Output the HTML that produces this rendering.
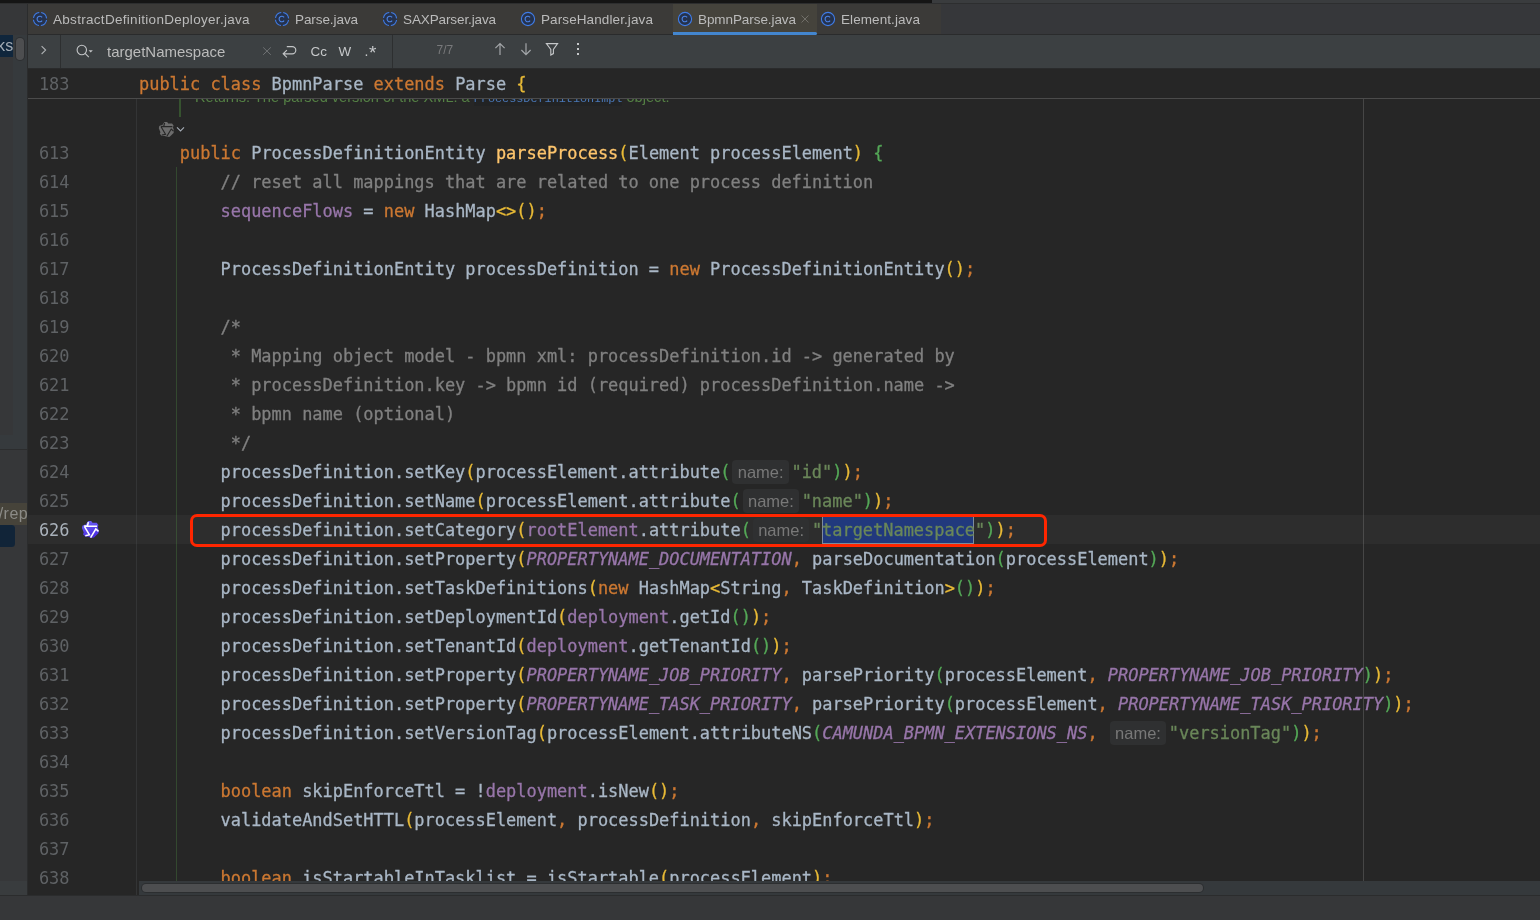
<!DOCTYPE html>
<html lang="en">
<head>
<meta charset="utf-8">
<title>BpmnParse.java</title>
<style>
html,body{margin:0;padding:0;}
body{will-change:transform;width:1540px;height:920px;overflow:hidden;background:#262626;position:relative;font-family:"Liberation Sans",sans-serif;}
.abs{position:absolute;}
/* top */
#topdark{left:0;top:0;width:932px;height:3px;background:#151515;}
#toplight{left:932px;top:0;width:608px;height:3px;background:#3a3c3e;}
#topline{left:0;top:3px;width:1540px;height:1px;background:#2d2e2f;}
/* left strip */
#strip{left:0;top:4px;width:27px;height:891px;background:#363739;}
#stripb{left:27px;top:4px;width:1px;height:891px;background:#2b2c2d;}
/* tab bar */
#tabbar{left:28px;top:4px;width:1512px;height:30px;background:#36373a;}
#tabsbg{left:28px;top:4px;width:913px;height:30px;background:#3b3a38;}
#tabact{left:673px;top:4px;width:144px;height:30px;background:#45433c;}
#tabul{left:673px;top:32px;width:144px;height:3px;background:#4386cf;border-radius:0 1.5px 1.5px 0;}
#tabline{left:28px;top:34px;width:1512px;height:1px;background:#2a2b2c;}
.tab{position:absolute;top:5px;height:27px;line-height:29px;font-size:13.5px;color:#bbbbbb;white-space:nowrap;}
.ticon{position:absolute;top:11px;width:16px;height:16px;}
/* search bar */
#sbar{left:28px;top:35px;width:1512px;height:33px;background:#3c4042;}
#sline{left:28px;top:68px;width:1512px;height:1px;background:#2a2b2c;}
.vdiv{position:absolute;top:35px;width:1px;height:33px;background:#2d2f30;}
.stxt{position:absolute;white-space:nowrap;color:#bbbbbb;}
/* editor */
#sticky{left:28px;top:69px;width:1512px;height:29px;background:#262626;}
#stickyline{left:28px;top:98px;width:1512px;height:1px;background:#4b4b4b;}
.code{font-family:"DejaVu Sans Mono","Liberation Mono",monospace;font-size:16.94px;}
.ln{position:absolute;left:28px;width:41.5px;text-align:right;height:29px;line-height:29px;color:#5f6265;font-family:"DejaVu Sans Mono","Liberation Mono",monospace;font-size:16.94px;padding-top:1px;box-sizing:content-box;}
.cl{position:absolute;left:139px;-webkit-text-stroke:0.3px;height:29px;line-height:29px;white-space:pre;color:#a9b7c6;font-family:"DejaVu Sans Mono","Liberation Mono",monospace;font-size:16.94px;padding-top:1px;}
.k{color:#cc7832;}
.f{color:#9876aa;}
.c{color:#9876aa;font-style:italic;}
.s{color:#6a8759;}
.m{color:#ffc66d;}
.g{color:#808080;}
.y{color:#e8ba36;}
.n{color:#54a857;}
.h{-webkit-text-stroke:0;display:inline-block;box-sizing:border-box;width:56.5px;height:24px;margin:0 2.5px 0 2px;padding-left:5.3px;border-radius:4px;background:#2f3031;color:#787878;font-family:"Liberation Sans",sans-serif;font-size:16.5px;line-height:24px;vertical-align:top;position:relative;top:2px;white-space:nowrap;overflow:hidden;}
</style>
</head>
<body>

<!-- top chrome -->
<div class="abs" id="topdark"></div>
<div class="abs" id="toplight"></div>
<div class="abs" id="topline"></div>

<!-- tab bar -->
<div class="abs" id="tabbar"></div>
<div class="abs" id="tabsbg"></div>
<div class="abs" id="tabact"></div>
<div class="abs" id="tabline"></div>
<div class="abs" id="tabul"></div>

<svg class="ticon" style="left:32px" viewBox="0 0 16 16"><circle cx="8" cy="8" r="6.6" fill="#25324d" stroke="#3f7ce8" stroke-width="1.1" stroke-dasharray="8.4 1.97" stroke-dashoffset="-1"/><path d="M10.1 6.4A2.750 2.750 0 1 0 10.1 9.600" fill="none" stroke="#4c86ea" stroke-width="1.1"/></svg>
<div class="tab" style="left:53px;letter-spacing:0.3px">AbstractDefinitionDeployer.java</div>

<svg class="ticon" style="left:274px" viewBox="0 0 16 16"><circle cx="8" cy="8" r="6.6" fill="#25324d" stroke="#3f7ce8" stroke-width="1.1" stroke-dasharray="8.4 1.97" stroke-dashoffset="-1"/><path d="M10.1 6.4A2.750 2.750 0 1 0 10.1 9.600" fill="none" stroke="#4c86ea" stroke-width="1.1"/></svg>
<div class="tab" style="left:295px;letter-spacing:-0.08px">Parse.java</div>

<svg class="ticon" style="left:382px" viewBox="0 0 16 16"><circle cx="8" cy="8" r="6.6" fill="#25324d" stroke="#3f7ce8" stroke-width="1.1" stroke-dasharray="8.4 1.97" stroke-dashoffset="-1"/><path d="M10.1 6.4A2.750 2.750 0 1 0 10.1 9.600" fill="none" stroke="#4c86ea" stroke-width="1.1"/></svg>
<div class="tab" style="left:403px;letter-spacing:-0.11px">SAXParser.java</div>

<svg class="ticon" style="left:520px" viewBox="0 0 16 16"><circle cx="8" cy="8" r="6.6" fill="#25324d" stroke="#3f7ce8" stroke-width="1.1"/><path d="M10.1 6.4A2.750 2.750 0 1 0 10.1 9.600" fill="none" stroke="#4c86ea" stroke-width="1.1"/></svg>
<div class="tab" style="left:541px;letter-spacing:0.1px">ParseHandler.java</div>

<svg class="ticon" style="left:677px" viewBox="0 0 16 16"><circle cx="8" cy="8" r="6.6" fill="#25324d" stroke="#3f7ce8" stroke-width="1.1"/><path d="M10.1 6.4A2.750 2.750 0 1 0 10.1 9.600" fill="none" stroke="#4c86ea" stroke-width="1.1"/></svg>
<div class="tab" style="left:698px;letter-spacing:-0.08px">BpmnParse.java</div>
<svg class="abs" style="left:800px;top:14px;width:10px;height:10px" viewBox="0 0 10 10"><path d="M1.5 1.5L8.5 8.5M8.5 1.5L1.5 8.5" stroke="#716f69" stroke-width="1" fill="none"/></svg>

<svg class="ticon" style="left:820px" viewBox="0 0 16 16"><circle cx="8" cy="8" r="6.6" fill="#25324d" stroke="#3f7ce8" stroke-width="1.1"/><path d="M10.1 6.4A2.750 2.750 0 1 0 10.1 9.600" fill="none" stroke="#4c86ea" stroke-width="1.1"/></svg>
<div class="tab" style="left:841px;letter-spacing:0.08px">Element.java</div>

<!-- search bar -->
<div class="abs" id="sbar"></div>
<div class="abs" id="sline"></div>
<div class="vdiv" style="left:60px"></div>
<div class="vdiv" style="left:392px"></div>
<!-- chevron -->
<svg class="abs" style="left:38px;top:43px;width:12px;height:14px" viewBox="0 0 12 14"><path d="M3.6 3.2L7.6 7.1L3.6 11" stroke="#aeb1b4" stroke-width="1.1" fill="none"/></svg>
<!-- magnifier -->
<svg class="abs" style="left:74px;top:42px;width:22px;height:18px" viewBox="0 0 22 18"><circle cx="7.800" cy="8" r="4.700" fill="none" stroke="#c3c5c7" stroke-width="1.1"/><path d="M11.1 11.4L14.800 15.100" stroke="#c3c5c7" stroke-width="1.1" fill="none"/><path d="M14.6 8.2h4.2l-2.1 2.2z" fill="#c3c5c7"/></svg>
<div class="stxt" style="left:107px;top:40px;font-size:15px;line-height:24px;">targetNamespace</div>
<!-- clear x -->
<svg class="abs" style="left:261px;top:45px;width:12px;height:12px" viewBox="0 0 12 12"><path d="M2.2 2.4L9.8 9.8M9.8 2.4L2.2 9.8" stroke="#6f7274" stroke-width="1" fill="none"/></svg>
<!-- newline icon -->
<svg class="abs" style="left:280px;top:43px;width:18px;height:16px" viewBox="0 0 18 16"><path d="M6.8 3.6H12.2A3.6 3.6 0 0 1 12.2 10.8H3.2M6.9 7.2L3.2 10.8L6.9 14.4" stroke="#c3c5c7" stroke-width="1.15" fill="none"/></svg>
<div class="stxt" style="left:310.5px;top:40.800px;font-size:13.4px;line-height:22px;color:#c6c8ca">Cc</div>
<div class="stxt" style="left:338.5px;top:40.800px;font-size:13.4px;line-height:22px;color:#c6c8ca">W</div>
<div class="stxt" style="left:364.5px;top:40.2px;font-size:14px;line-height:22px;color:#c6c8ca;">.<span style="font-size:19px;line-height:1px;vertical-align:-3px;margin-left:0.5px">*</span></div>
<div class="stxt" style="left:436.5px;top:39px;font-size:12px;line-height:22px;color:#78797b">7/7</div>
<!-- arrows -->
<svg class="abs" style="left:492px;top:41px;width:16px;height:16px" viewBox="0 0 16 16"><path d="M8 14V2.6M3.4 7.2L8 2.6L12.6 7.2" stroke="#a3a6a9" stroke-width="1.2" fill="none"/></svg>
<svg class="abs" style="left:518px;top:41px;width:16px;height:16px" viewBox="0 0 16 16"><path d="M8 2.2V13.6M3.4 9L8 13.6L12.6 9" stroke="#a3a6a9" stroke-width="1.2" fill="none"/></svg>
<!-- filter -->
<svg class="abs" style="left:544px;top:41px;width:16px;height:16px" viewBox="0 0 16 16"><path d="M2.4 2.6H13.6L9.4 8.4V12.6L6.8 14V8.4Z" stroke="#c6c8ca" stroke-width="1.1" fill="none" stroke-linejoin="miter"/></svg>
<!-- more dots -->
<div class="abs" style="left:577px;top:43px;width:2px;height:2px;background:#c6c8ca"></div>
<div class="abs" style="left:577px;top:48px;width:2px;height:2px;background:#c6c8ca"></div>
<div class="abs" style="left:577px;top:53px;width:2px;height:2px;background:#c6c8ca"></div>

<!-- left strip -->
<div class="abs" id="strip"></div>
<div class="abs" id="stripb"></div>
<div class="abs" style="left:13px;top:35px;width:14px;height:414px;background:#363a3d"></div>
<div class="abs" style="left:0;top:435px;width:27px;height:14px;background:#363a3d"></div>
<div class="abs" style="left:0;top:35px;width:13px;height:22px;background:#10263c;overflow:hidden"><span style="position:absolute;left:-3.1px;top:0.7px;font-size:16px;letter-spacing:0.3px;line-height:20px;color:#a3acb5;white-space:nowrap">ks</span></div>
<div class="abs" style="left:16px;top:38px;width:8px;height:22px;border-radius:4px;background:#4d4e50;box-shadow:0 0 0 1px #2d2f31"></div>
<div class="abs" style="left:0;top:449px;width:27px;height:1px;background:#2c2d2e"></div>
<div class="abs" style="left:0;top:450px;width:27px;height:445px;background:#363739"></div>
<div class="abs" style="left:0;top:503px;width:27px;height:22px;background:#46433a;overflow:hidden"><span style="position:absolute;left:-1.300px;top:0.5px;font-size:16px;letter-spacing:0.45px;line-height:20px;color:#8b8b87;white-space:nowrap">/repo</span></div>
<div class="abs" style="left:-6px;top:525px;width:21px;height:22px;border-radius:3.5px;background:#112438"></div>
<div class="abs" style="left:0;top:881px;width:27px;height:14px;background:#393c3e"></div>

<!-- editor -->
<div class="abs" style="left:136px;top:99px;width:1px;height:796px;background:#333435"></div>
<div class="abs" style="left:176px;top:167px;width:1px;height:714px;background:#33482f"></div>
<div class="abs" style="left:1363px;top:99px;width:1px;height:782px;background:#464646"></div>
<div class="abs" style="left:28px;top:515px;width:1512px;height:29px;background:#2d2d2d"></div>
<div class="abs" style="left:136px;top:515px;width:1px;height:29px;background:#38393a"></div>
<div class="abs" style="left:176px;top:515px;width:1px;height:29px;background:#384d34"></div>
<div class="abs" style="left:1363px;top:515px;width:1px;height:29px;background:#4b4b4b"></div>

<div class="abs" style="left:821.5px;top:516px;width:152.5px;height:28px;box-sizing:border-box;background:#21397d;border:1px solid #7d8b9c"></div>

<!-- rendered doc fragment -->
<div class="abs" style="left:179px;top:99px;width:2px;height:18px;background:#36522f"></div>
<div class="abs" style="left:195px;top:87px;height:20px;line-height:20px;font-size:14.6px;color:#548044;white-space:nowrap">Returns: The parsed version of the XML: a <span style="font-family:'Liberation Mono',monospace;font-size:11.8px;color:#4a78b8;background:#222324">ProcessDefinitionImpl</span> object.</div>

<!-- inlay icon row -->
<svg class="abs" style="left:158px;top:121px;width:17px;height:17px" viewBox="0 0 19 19"><path d="M7.1 1h3.1l1.300 1.800h4.200l1.700 2.300-.700 2 1.300 3.900-.600 2.300-4.300 4.200-3.900.5-1-1.300-4.200-.300-2-2.200.700-1.600-1.800-4.600.500-2.300 2-1h1.300z" fill="#6c6c6c"/><path d="M7.400 2.100L6.400 6L3.200 6.100L16.100 6.300M3.400 6.400L8.400 14.800L4.300 15.700M9.600 17.600L14.800 9L17.500 11.400" stroke="#262626" stroke-width="1.300" fill="none"/></svg>
<svg class="abs" style="left:176px;top:126px;width:9px;height:7px" viewBox="0 0 9 7"><path d="M1 1.300L4.500 4.900L8 1.300" stroke="#a4abb5" stroke-width="1.1" fill="none"/></svg>


<!-- sticky line -->
<div class="abs" id="sticky"></div>
<div class="abs" id="stickyline"></div>
<div class="ln" style="top:69px">183</div>
<div class="cl" style="top:69px"><span class="k">public class</span> BpmnParse <span class="k">extends</span> Parse <span class="y">{</span></div>

<!-- code -->
<div class="ln" style="top:138px">613</div>
<div class="cl" style="top:138px">    <span class="k">public</span> ProcessDefinitionEntity <span class="m">parseProcess</span><span class="y">(</span>Element processElement<span class="y">)</span> <span class="n">{</span></div>
<div class="ln" style="top:167px">614</div>
<div class="cl" style="top:167px">        <span class="g">// reset all mappings that are related to one process definition</span></div>
<div class="ln" style="top:196px">615</div>
<div class="cl" style="top:196px">        <span class="f">sequenceFlows</span> = <span class="k">new</span> HashMap<span class="y">&lt;&gt;()</span><span class="k">;</span></div>
<div class="ln" style="top:225px">616</div>
<div class="ln" style="top:254px">617</div>
<div class="cl" style="top:254px">        ProcessDefinitionEntity processDefinition = <span class="k">new</span> ProcessDefinitionEntity<span class="y">()</span><span class="k">;</span></div>
<div class="ln" style="top:283px">618</div>
<div class="ln" style="top:312px">619</div>
<div class="cl" style="top:312px">        <span class="g">/*</span></div>
<div class="ln" style="top:341px">620</div>
<div class="cl" style="top:341px">        <span class="g"> * Mapping object model - bpmn xml: processDefinition.id -&gt; generated by</span></div>
<div class="ln" style="top:370px">621</div>
<div class="cl" style="top:370px">        <span class="g"> * processDefinition.key -&gt; bpmn id (required) processDefinition.name -&gt;</span></div>
<div class="ln" style="top:399px">622</div>
<div class="cl" style="top:399px">        <span class="g"> * bpmn name (optional)</span></div>
<div class="ln" style="top:428px">623</div>
<div class="cl" style="top:428px">        <span class="g"> */</span></div>
<div class="ln" style="top:457px">624</div>
<div class="cl" style="top:457px">        processDefinition.setKey<span class="y">(</span>processElement.attribute<span class="n">(</span><span class="h">name:</span><span class="s">"id"</span><span class="n">)</span><span class="y">)</span><span class="k">;</span></div>
<div class="ln" style="top:486px">625</div>
<div class="cl" style="top:486px">        processDefinition.setName<span class="y">(</span>processElement.attribute<span class="n">(</span><span class="h">name:</span><span class="s">"name"</span><span class="n">)</span><span class="y">)</span><span class="k">;</span></div>
<div class="ln" style="top:515px;color:#a9b1ba">626</div>
<div class="cl" style="top:515px">        processDefinition.setCategory<span class="y">(</span><span class="f">rootElement</span>.attribute<span class="n">(</span><span class="h">name:</span><span class="s">"targetNamespace"</span><span class="n">)</span><span class="y">)</span><span class="k">;</span></div>
<div class="ln" style="top:544px">627</div>
<div class="cl" style="top:544px">        processDefinition.setProperty<span class="y">(</span><span class="c">PROPERTYNAME_DOCUMENTATION</span><span class="k">,</span> parseDocumentation<span class="n">(</span>processElement<span class="n">)</span><span class="y">)</span><span class="k">;</span></div>
<div class="ln" style="top:573px">628</div>
<div class="cl" style="top:573px">        processDefinition.setTaskDefinitions<span class="y">(</span><span class="k">new</span> HashMap<span class="y">&lt;</span>String<span class="k">,</span> TaskDefinition<span class="y">&gt;</span><span class="n">()</span><span class="y">)</span><span class="k">;</span></div>
<div class="ln" style="top:602px">629</div>
<div class="cl" style="top:602px">        processDefinition.setDeploymentId<span class="y">(</span><span class="f">deployment</span>.getId<span class="n">()</span><span class="y">)</span><span class="k">;</span></div>
<div class="ln" style="top:631px">630</div>
<div class="cl" style="top:631px">        processDefinition.setTenantId<span class="y">(</span><span class="f">deployment</span>.getTenantId<span class="n">()</span><span class="y">)</span><span class="k">;</span></div>
<div class="ln" style="top:660px">631</div>
<div class="cl" style="top:660px">        processDefinition.setProperty<span class="y">(</span><span class="c">PROPERTYNAME_JOB_PRIORITY</span><span class="k">,</span> parsePriority<span class="n">(</span>processElement<span class="k">,</span> <span class="c">PROPERTYNAME_JOB_PRIORITY</span><span class="n">)</span><span class="y">)</span><span class="k">;</span></div>
<div class="ln" style="top:689px">632</div>
<div class="cl" style="top:689px">        processDefinition.setProperty<span class="y">(</span><span class="c">PROPERTYNAME_TASK_PRIORITY</span><span class="k">,</span> parsePriority<span class="n">(</span>processElement<span class="k">,</span> <span class="c">PROPERTYNAME_TASK_PRIORITY</span><span class="n">)</span><span class="y">)</span><span class="k">;</span></div>
<div class="ln" style="top:718px">633</div>
<div class="cl" style="top:718px">        processDefinition.setVersionTag<span class="y">(</span>processElement.attributeNS<span class="n">(</span><span class="c">CAMUNDA_BPMN_EXTENSIONS_NS</span><span class="k">,</span> <span class="h">name:</span><span class="s">"versionTag"</span><span class="n">)</span><span class="y">)</span><span class="k">;</span></div>
<div class="ln" style="top:747px">634</div>
<div class="ln" style="top:776px">635</div>
<div class="cl" style="top:776px">        <span class="k">boolean</span> skipEnforceTtl = !<span class="f">deployment</span>.isNew<span class="y">()</span><span class="k">;</span></div>
<div class="ln" style="top:805px">636</div>
<div class="cl" style="top:805px">        validateAndSetHTTL<span class="y">(</span>processElement<span class="k">,</span> processDefinition<span class="k">,</span> skipEnforceTtl<span class="y">)</span><span class="k">;</span></div>
<div class="ln" style="top:834px">637</div>
<div class="ln" style="top:863px">638</div>
<div class="cl" style="top:863px">        <span class="k">boolean</span> isStartableInTasklist = isStartable<span class="y">(</span>processElement<span class="y">)</span><span class="k">;</span></div>

<!-- red annotation box -->
<div class="abs" style="left:190px;top:513.7px;width:857.2px;height:33.3px;box-sizing:border-box;border:3.2px solid #ff2600;border-radius:7px"></div>

<!-- gutter icon line 626 -->
<svg class="abs" style="left:81px;top:520px;width:19px;height:19px" viewBox="0 0 19 19"><defs><linearGradient id="lg1" x1="0" y1="0" x2="0.300" y2="1"><stop offset="0" stop-color="#6f66f8"/><stop offset="1" stop-color="#4a2ce0"/></linearGradient></defs><path d="M7.1 1h3.1l1.300 1.800h4.200l1.700 2.300-.700 2 1.300 3.900-.600 2.300-4.300 4.200-3.900.5-1-1.300-4.200-.300-2-2.200.700-1.600-1.800-4.600.500-2.300 2-1h1.300z" fill="url(#lg1)"/><path d="M7.400 2.100L6.400 6L3.200 6.100L16.100 6.300M3.400 6.400L8.400 14.800L4.300 15.700M9.600 17.600L14.800 9L17.500 11.400" stroke="#ffffff" stroke-width="1.5" fill="none" stroke-linejoin="miter"/></svg>

<!-- horizontal scrollbar -->
<div class="abs" style="left:139px;top:881px;width:1401px;height:14px;background:#35393c"></div>
<div class="abs" style="left:142px;top:884px;width:1061px;height:8px;border-radius:4px;background:#4d4e50;box-shadow:0 0 0 1px #2c2e30"></div>

<!-- bottom -->
<div class="abs" style="left:0;top:896px;width:1540px;height:24px;background:#363739"></div>
<div class="abs" style="left:0;top:895px;width:1540px;height:1px;background:#2b2c2d"></div>

</body>
</html>
